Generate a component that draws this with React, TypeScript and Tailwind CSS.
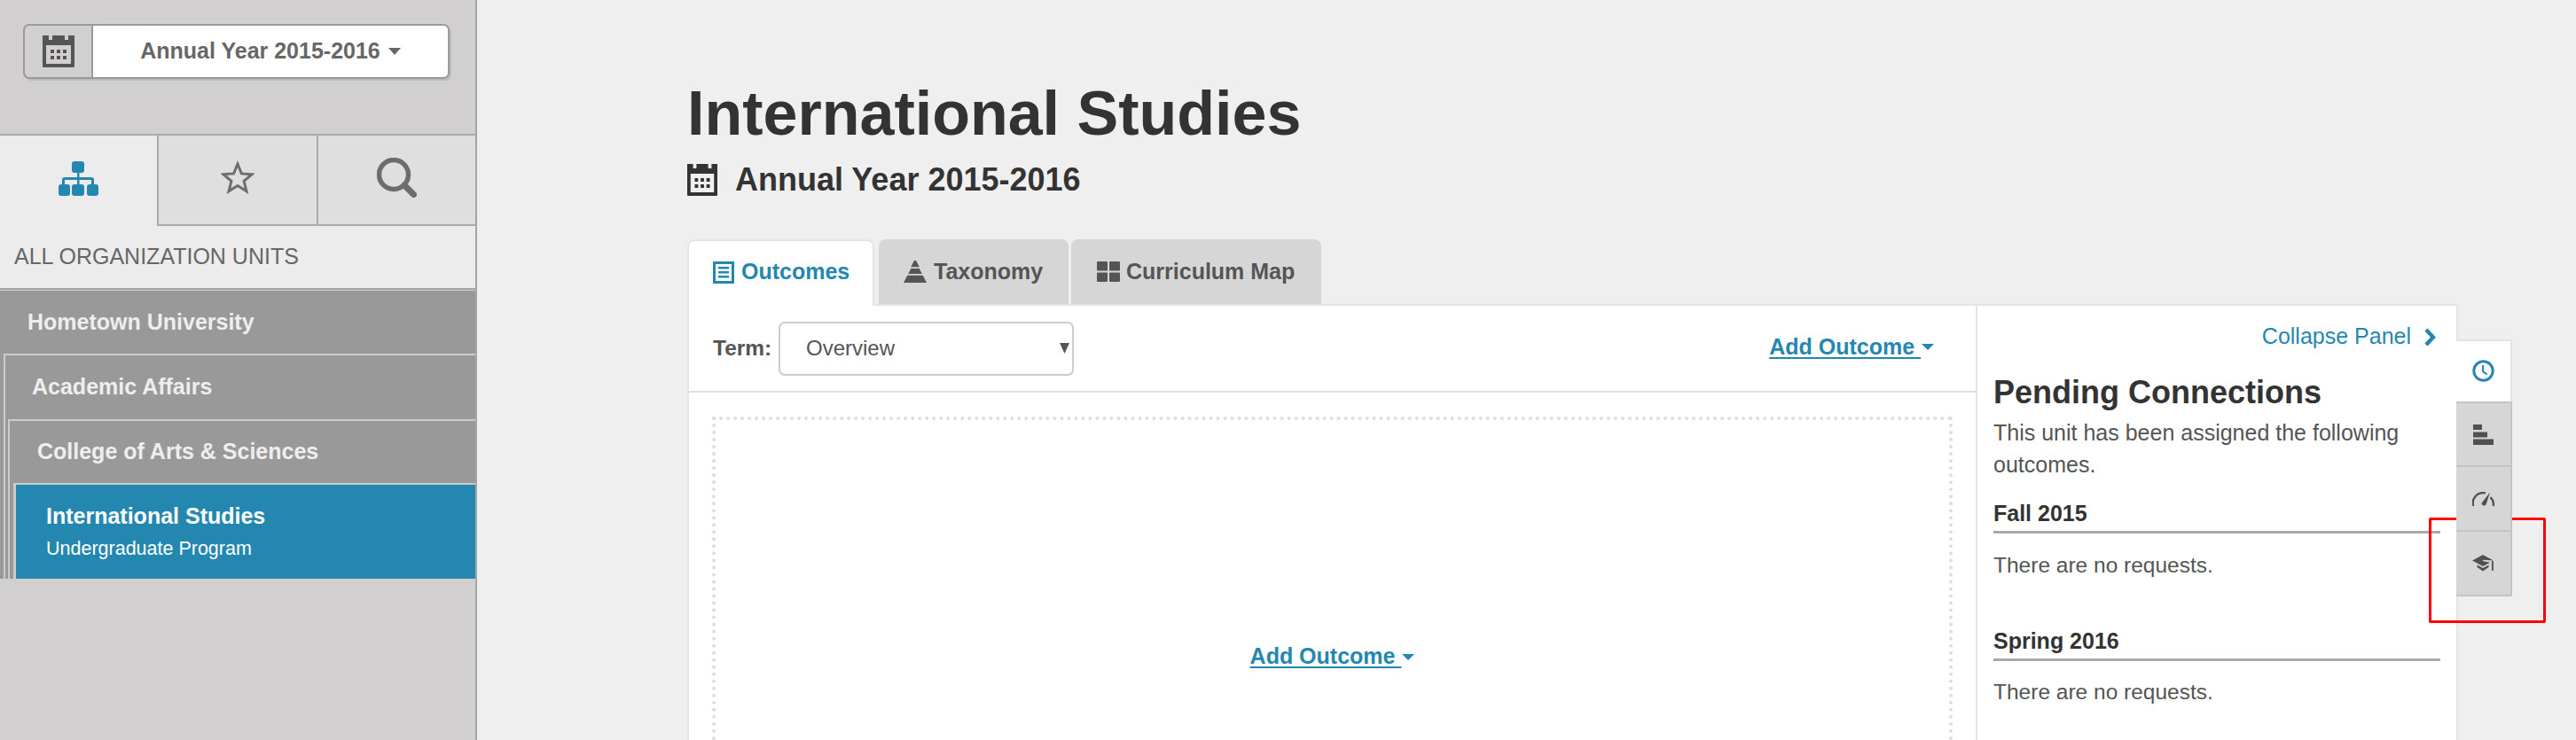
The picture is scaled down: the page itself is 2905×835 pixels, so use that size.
import React from "react";

const Calendar = ({ className, color }: { className: string; color: string }) => (
  <svg viewBox="0 0 36 36" preserveAspectRatio="none" className={className}>
    <path
      fill={color}
      fillRule="evenodd"
      d="M1 0h35v35a1 1 0 0 1-1 1H1a1 1 0 0 1-1-1V0h7v5h4V0h14v5h4V0z M4 11v21h28V11z M9 16h4v4H9z M16 16h4v4h-4z M23 16h4v4h-4z M9 23h4v4H9z M16 23h4v4h-4z M23 23h4v4h-4z"
    />
  </svg>
);

const Caret = ({ className }: { className: string }) => (
  <svg viewBox="0 0 14 8" preserveAspectRatio="none" className={className}>
    <path d="M0 0h14L7 8z" fill="currentColor" />
  </svg>
);

const OrgIcon = () => (
  <svg viewBox="0 0 45 39" className="h-[39px] w-[45px]">
    <g fill="#2487b0">
      <rect x="15" y="0" width="14" height="13" rx="3" />
      <rect x="0" y="26" width="13" height="13" rx="3" />
      <rect x="15" y="26" width="14" height="13" rx="3" />
      <rect x="32" y="26" width="13" height="13" rx="3" />
      <rect x="21" y="12" width="2.500" height="15" />
      <path d="M4 27v-6a3 3 0 0 1 3-3h30a3 3 0 0 1 3 3v6h-3v-6H7v6z" />
    </g>
  </svg>
);

const StarIcon = () => (
  <svg viewBox="0 0 38 38" className="h-[38px] w-[38px]">
    <path
      d="M19 4L23.400 14.900 35.200 15.700 26.100 23.300 29 34.800 19 28.500 9 34.800 11.900 23.300 2.800 15.700 14.600 14.900z"
      fill="none"
      stroke="#6d6d6d"
      strokeWidth="3"
      strokeLinejoin="miter"
    />
  </svg>
);

const SearchIcon = () => (
  <svg viewBox="0 0 45 45" className="h-[45px] w-[45px]">
    <circle cx="19" cy="19" r="16.500" fill="none" stroke="#6d6d6d" strokeWidth="5.500" />
    <path d="M31 31l10.500 10.500" stroke="#6d6d6d" strokeWidth="7" strokeLinecap="round" />
  </svg>
);

const OutcomesIcon = () => (
  <svg viewBox="0 0 24 25" className="h-[25px] w-[24px]">
    <path
      fill="#2487b0"
      fillRule="evenodd"
      d="M0 0h24v25H0z M3 3v19h18V3z M6 6h12v2.500H6z M6 11h12v2.500H6z M6 16h12v2.500H6z"
    />
  </svg>
);

const TaxonomyIcon = () => (
  <svg viewBox="0 0 26 25" className="h-[25px] w-[26px]">
    <path fill="#555" d="M12 0h2l3.800 7.300H8.200z M8.300 9h9.400l3.100 6H5.200z M4.300 16.700h17.400L26 25H0z" />
  </svg>
);

const GridIcon = () => (
  <svg viewBox="0 0 26 23" className="h-[23px] w-[26px]">
    <g fill="#555">
      <rect x="0" y="0" width="12" height="10.500" rx="1" />
      <rect x="14" y="0" width="12" height="10.500" rx="1" />
      <rect x="0" y="12.500" width="12" height="10.500" rx="1" />
      <rect x="14" y="12.500" width="12" height="10.500" rx="1" />
    </g>
  </svg>
);

const ClockIcon = () => (
  <svg viewBox="0 0 25 25" className="h-[25px] w-[25px]">
    <circle cx="12.500" cy="12.500" r="10.700" fill="none" stroke="#2487b0" strokeWidth="3" />
    <path d="M12 6v7l4.500 3.500" fill="none" stroke="#2487b0" strokeWidth="2" />
  </svg>
);

const BarsIcon = () => (
  <svg viewBox="0 0 23 23" className="h-[23px] w-[23px]">
    <g fill="#505050">
      <rect x="0" y="0" width="10" height="6" />
      <rect x="0" y="8.500" width="16" height="6" />
      <rect x="0" y="16.500" width="23" height="6.500" />
    </g>
  </svg>
);

const GaugeIcon = () => (
  <svg viewBox="0 0 25 16" className="h-[16px] w-[25px]">
    <path d="M1.200 16A11.500 11.500 0 0 1 15 1.500" fill="none" stroke="#505050" strokeWidth="2.300" />
    <path d="M20.500 6A11.500 11.500 0 0 1 23.800 16" fill="none" stroke="#505050" strokeWidth="2.300" />
    <path d="M20 .5L15.500 14.500a2.800 2.800 0 0 1-5-1.800z" fill="#505050" />
  </svg>
);

const CapIcon = () => (
  <svg viewBox="0 0 25 19" className="h-[19px] w-[25px]">
    <path fill="#505050" d="M12 0L0 6.500 12 13l8-4.300-8.500-1.700 1-1.200L24 6.500z" />
    <path fill="#505050" d="M5.500 11.500L12 15l6.500-3.500v2.500L12 18.500 5.500 14z" />
    <rect x="22" y="7" width="1.800" height="11" fill="#505050" />
  </svg>
);

const Requests = ({ term, topClass, textClass }: { term: string; topClass: string; textClass: string }) => (
  <div>
    <div className={`${topClass} border-b-[3px] border-[#a8a8a8] pb-[5px] text-[25px] font-bold leading-[30px] text-[#333]`}>
      {term}
    </div>
    <p className={`${textClass} text-[24.500px] leading-[36px] text-[#555]`}>There are no requests.</p>
  </div>
);

export default function App() {
  return (
    <div className="relative flex h-[835px] w-[2905px] overflow-hidden bg-[#efefef] font-['Liberation_Sans',Arial,sans-serif]">
      <aside className="flex h-[835px] w-[538px] shrink-0 flex-col border-r-2 border-[#a5a5a5] bg-[#d1cfd0]">
        <div className="h-[151px] pl-[26px] pt-[27px]">
          <div className="flex h-[62px] w-[481px] overflow-hidden rounded-[7px] border-2 border-[#999] shadow-[2px_2px_0_#bbb]">
            <div className="flex w-[77px] items-center justify-center border-r-2 border-[#999]">
              <Calendar className="h-[36px] w-[36px]" color="#555" />
            </div>
            <div className="flex flex-1 items-center justify-center gap-[9px] bg-white text-[25px] font-bold text-[#666]">
              <span>Annual Year 2015-2016</span>
              <Caret className="h-[8px] w-[14px] text-[#666]" />
            </div>
          </div>
        </div>
        <div className="flex h-[104px] border-t-2 border-[#aaa]">
          <div className="flex w-[177px] items-center justify-center bg-[#ececec] pb-[6px]">
            <OrgIcon />
          </div>
          <div className="flex w-[180px] items-center justify-center border-b-2 border-l-2 border-[#aaa] bg-[#dfdfdf] pb-[6px]">
            <StarIcon />
          </div>
          <div className="flex flex-1 items-center justify-center border-b-2 border-l-2 border-[#aaa] bg-[#dfdfdf] pb-[6px]">
            <SearchIcon />
          </div>
        </div>
        <div className="h-[70px] bg-[#ececec] pl-[16px] pt-[16px] text-[25px] leading-[36px] text-[#666]">
          ALL ORGANIZATION UNITS
        </div>
        <div className="border-t-2 border-[#a5a5a5]">
          <div className="border-t border-[#ccc] bg-[#999]">
            <div className="flex h-[71px] items-center pl-[31px] text-[25px] font-bold text-[#eee]">Hometown University</div>
            <div className="ml-[4px] border-l-2 border-t-2 border-[#ccc]">
              <div className="flex h-[72px] items-center pl-[30px] text-[25px] font-bold text-[#eee]">Academic Affairs</div>
              <div className="ml-[3px] border-l-2 border-t-2 border-[#ccc]">
                <div className="flex h-[70px] items-center pl-[31px] text-[25px] font-bold text-[#eee]">College of Arts &amp; Sciences</div>
                <div className="ml-[4px] border-l-[3px] border-t-2 border-[#ccc]">
                  <div className="flex h-[106px] flex-col bg-[#2487b0] pl-[34px] pt-[18px] text-white">
                    <div className="text-[25px] font-bold leading-[34px]">International Studies</div>
                    <div className="mt-[5px] text-[21.500px] leading-[30px]">Undergraduate Program</div>
                  </div>
                </div>
              </div>
            </div>
          </div>
        </div>
      </aside>

      <main className="ml-[237px] flex w-[2058px] shrink-0 flex-col pt-[88px]">
        <h1 className="text-[70px] font-bold leading-[80px] text-[#333]">International Studies</h1>
        <div className="mt-[15px] flex h-[40px] items-center gap-[20px]">
          <Calendar className="h-[36px] w-[34px]" color="#333" />
          <span className="text-[36px] font-bold leading-[40px] text-[#333]">Annual Year 2015-2016</span>
        </div>

        <div className="relative z-10 mt-[47px] flex h-[75px] items-start text-[25px] font-bold">
          <div className="flex h-[75px] w-[211px] items-center gap-[8px] rounded-t-[8px] border-2 border-b-0 border-[#e4e4e4] bg-white pb-[3px] pl-[27px] text-[#2487b0]">
            <OutcomesIcon />
            <span>Outcomes</span>
          </div>
          <div className="ml-[5px] flex h-[73px] w-[214px] items-center gap-[8px] rounded-t-[8px] bg-[#d6d6d6] pl-[28px] text-[#555]">
            <TaxonomyIcon />
            <span>Taxonomy</span>
          </div>
          <div className="ml-[3px] flex h-[73px] w-[282px] items-center gap-[7px] rounded-t-[8px] bg-[#d6d6d6] pl-[29px] text-[#555]">
            <GridIcon />
            <span>Curriculum Map</span>
          </div>
        </div>

        <div className="-mt-[2px] flex items-start">
          <div className="flex w-[1453px] flex-col border-l-2 border-t-2 border-[#e4e4e4] bg-white">
            <div className="flex h-[98px] items-center justify-between border-b-2 border-[#e0e0e0] pl-[27px] pr-[47px]">
              <div className="flex items-center gap-[8px]">
                <span className="w-[66px] text-[24.500px] font-bold text-[#555]">Term:</span>
                <div className="flex h-[61px] w-[333px] items-center justify-between rounded-[7px] border-2 border-[#ccc] pl-[29px] pr-[3px] text-[24px] text-[#555]">
                  <span>Overview</span>
                  <Caret className="h-[12px] w-[11px] text-[#555]" />
                </div>
              </div>
              <div className="flex items-center gap-[1px] pb-[3px] text-[25px] font-bold text-[#2487b0]">
                <span className="whitespace-pre underline decoration-2 underline-offset-[3px]">Add Outcome </span>
                <Caret className="h-[7px] w-[14px]" />
              </div>
            </div>
            <div className="ml-[26px] mr-[26px] mt-[27px] flex h-[542px] items-center justify-center border-4 border-dotted border-[#ddd] text-[25px] font-bold text-[#2487b0]">
              <span className="whitespace-pre underline decoration-2 underline-offset-[3px]">Add Outcome </span>
              <Caret className="ml-[1px] h-[7px] w-[14px]" />
            </div>
          </div>

          <div className="h-[600px] w-[544px] border-x-2 border-t-2 border-[#e4e4e4] bg-white pl-[18px] pr-[18px]">
            <div className="flex h-[70px] items-center justify-end gap-[14px] pr-[5px] text-[25px] text-[#2487b0]">
              <span>Collapse Panel</span>
              <svg viewBox="0 0 14 21" className="h-[21px] w-[14px]">
                <path d="M3 2l8 8.500L3 19" fill="none" stroke="#2487b0" strokeWidth="4.500" />
              </svg>
            </div>
            <h2 className="mt-[8px] text-[36px] font-bold leading-[40px] text-[#333]">Pending Connections</h2>
            <p className="mt-[8px] text-[25px] leading-[35.500px] text-[#555]">This unit has been assigned the following outcomes.</p>
            <Requests term="Fall 2015" topClass="mt-[22px]" textClass="mt-[18px]" />
            <Requests term="Spring 2016" topClass="mt-[52px]" textClass="mt-[17px]" />
          </div>

          <div className="relative z-10 -ml-[2px] mt-[40px] flex w-[63px] flex-col">
            <div className="flex h-[70px] items-center justify-center border-r-2 border-t-2 border-[#e4e4e4] bg-white pb-[2px]">
              <ClockIcon />
            </div>
            <div className="flex h-[74px] items-center justify-center border-2 border-l-0 border-[#c4c4c4] bg-[#d6d6d6]">
              <BarsIcon />
            </div>
            <div className="flex h-[73px] items-center justify-center border-b-2 border-r-2 border-[#c4c4c4] bg-[#d6d6d6]">
              <GaugeIcon />
            </div>
            <div className="flex h-[73px] items-center justify-center border-b-2 border-r-2 border-[#c4c4c4] bg-[#d6d6d6]">
              <CapIcon />
            </div>
          </div>
        </div>
      </main>

      <div className="absolute left-[2739px] top-[584px] h-[119px] w-[132px] rounded-[2px] border-[3.500px] border-[#ff0000]" />
    </div>
  );
}
